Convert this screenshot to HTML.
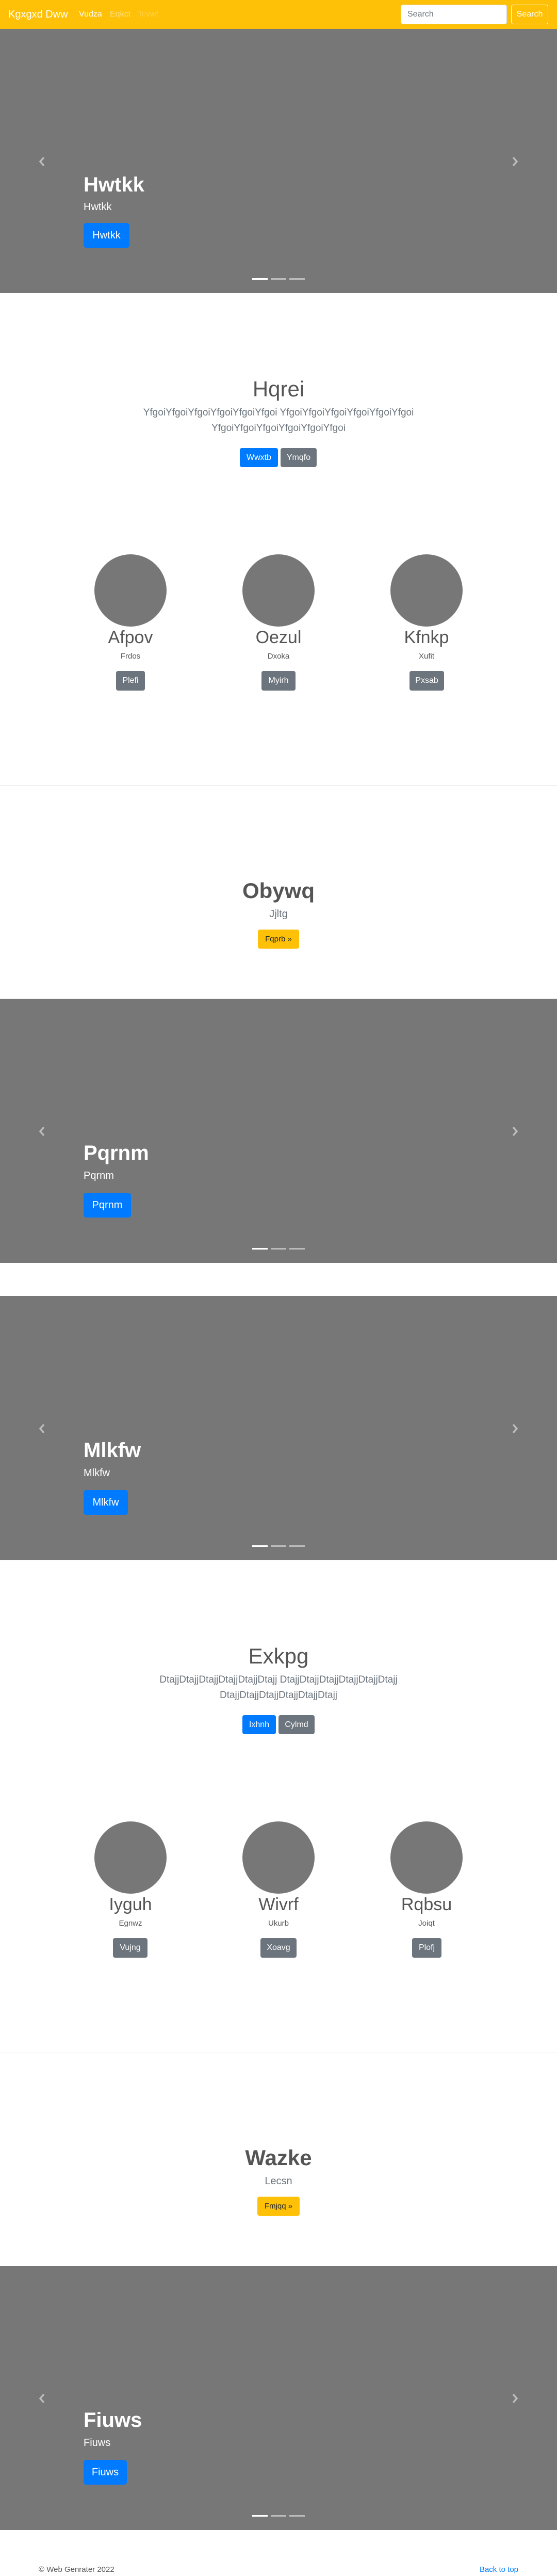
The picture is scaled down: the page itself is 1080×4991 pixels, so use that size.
<!DOCTYPE html>
<html><head><meta charset="utf-8">
<style>
*{box-sizing:border-box;margin:0;padding:0}
html,body{width:1080px;height:4991px;overflow:hidden;background:#fff;font-family:"Liberation Sans",sans-serif;color:#212529}
.a{position:absolute}
.nav{left:0;top:0;width:1080px;height:56px;background:#ffc107}
.car{left:0;width:1080px;height:512px;background:#777}
.c{text-align:center;left:0;width:1080px;white-space:nowrap}
.btn{position:absolute;border-radius:4px;color:#fff;text-align:center;font-size:16px}
.circ{position:absolute;width:140px;height:140px;border-radius:50%;background:#777}
.ind{position:absolute;top:483px;width:30px;height:3px;background:rgba(255,255,255,.5)}
</style></head><body>
<div class="a nav">
  <div class="a" style="left:16px;top:14px;font-size:20px;color:#fff;line-height:28px">Kgxgxd Dww</div>
  <div class="a" style="left:153px;top:16px;font-size:16px;line-height:24px;color:#fff">Vudza</div>
  <div class="a" style="left:213px;top:16px;font-size:16px;line-height:24px;color:rgba(255,255,255,.5)">Eqkct</div>
  <div class="a" style="left:267px;top:16px;font-size:16px;line-height:24px;color:rgba(255,255,255,.25)">Tcvwf</div>
  <div class="a" style="left:777px;top:9px;width:206px;height:38px;background:#fff;border:1px solid #ced4da;border-radius:4px;padding:6px 12px;font-size:16px;line-height:24px;color:#6c757d">Search</div>
  <div class="a" style="left:991px;top:9px;width:72px;height:38px;border:1px solid #fff;border-radius:4px;font-size:16px;line-height:36px;text-align:center;color:#fff">Search</div>
</div>

<div class="a car" style="top:56px">
  <svg class="a" style="left:74px;top:247px" width="14" height="20" viewBox="0 0 14 20"><path d="M11 2 L4 10 L11 18" stroke="#bbb" stroke-width="3.5" fill="none"/></svg>
  <svg class="a" style="left:992px;top:247px" width="14" height="20" viewBox="0 0 14 20"><path d="M3 2 L10 10 L3 18" stroke="#bbb" stroke-width="3.5" fill="none"/></svg>
  <div class="a" style="left:162px;top:278px;font-size:40px;font-weight:bold;color:#fff;line-height:48px">Hwtkk</div>
  <div class="a" style="left:162px;top:331px;font-size:20px;color:#fff;line-height:28px">Hwtkk</div>
  <div class="btn" style="left:162px;top:376px;width:89px;height:48px;background:#007bff;font-size:20px;line-height:48px;border-radius:5px">Hwtkk</div>
  <div class="ind" style="left:489px;background:#fff"></div><div class="ind" style="left:525px"></div><div class="ind" style="left:561px"></div>
</div>

<div class="a c" style="top:728px;font-size:42px;font-weight:300;color:#555;line-height:52px">Hqrei</div>
<div class="a c" style="top:785px;font-size:19px;font-weight:300;color:#6c757d;line-height:30px">YfgoiYfgoiYfgoiYfgoiYfgoiYfgoi YfgoiYfgoiYfgoiYfgoiYfgoiYfgoi<br>YfgoiYfgoiYfgoiYfgoiYfgoiYfgoi</div>
<div class="btn" style="left:465px;top:868px;width:74px;height:37px;background:#007bff;line-height:37px">Wwxtb</div>
<div class="btn" style="left:544px;top:868px;width:70px;height:37px;background:#6c757d;line-height:37px">Ymqfo</div>

<div class="circ" style="left:183px;top:1074px"></div>
<div class="circ" style="left:470px;top:1074px"></div>
<div class="circ" style="left:757px;top:1074px"></div>
<div class="a" style="left:153px;width:200px;text-align:center;top:1214px;font-size:34px;color:#555;line-height:42px">Afpov</div>
<div class="a" style="left:440px;width:200px;text-align:center;top:1214px;font-size:34px;color:#555;line-height:42px">Oezul</div>
<div class="a" style="left:727px;width:200px;text-align:center;top:1214px;font-size:34px;color:#555;line-height:42px">Kfnkp</div>
<div class="a" style="left:153px;width:200px;text-align:center;top:1261px;font-size:15px;color:#555;line-height:22px">Frdos</div>
<div class="a" style="left:440px;width:200px;text-align:center;top:1261px;font-size:15px;color:#555;line-height:22px">Dxoka</div>
<div class="a" style="left:727px;width:200px;text-align:center;top:1261px;font-size:15px;color:#555;line-height:22px">Xufit</div>
<div class="btn" style="left:225px;top:1300px;width:56px;height:38px;background:#6c757d;line-height:38px">Plefi</div>
<div class="btn" style="left:507px;top:1300px;width:66px;height:38px;background:#6c757d;line-height:38px">Myirh</div>
<div class="btn" style="left:794px;top:1300px;width:67px;height:38px;background:#6c757d;line-height:38px">Pxsab</div>
<div class="a" style="left:0;top:1521px;width:1080px;height:1px;background:#e5e5e5"></div>

<div class="a c" style="top:1700px;font-size:42px;font-weight:bold;color:#555;line-height:52px">Obywq</div>
<div class="a c" style="top:1757px;font-size:20px;font-weight:300;color:#6c757d;line-height:28px">Jjltg</div>
<div class="btn" style="left:500px;top:1801px;width:80px;height:37px;background:#ffc107;color:#212529;line-height:37px;font-size:15px">Fqprb »</div>

<div class="a car" style="top:1935px">
  <svg class="a" style="left:74px;top:247px" width="14" height="20" viewBox="0 0 14 20"><path d="M11 2 L4 10 L11 18" stroke="#bbb" stroke-width="3.5" fill="none"/></svg>
  <svg class="a" style="left:992px;top:247px" width="14" height="20" viewBox="0 0 14 20"><path d="M3 2 L10 10 L3 18" stroke="#bbb" stroke-width="3.5" fill="none"/></svg>
  <div class="a" style="left:162px;top:275px;font-size:40px;font-weight:bold;color:#fff;line-height:48px">Pqrnm</div>
  <div class="a" style="left:162px;top:329px;font-size:20px;color:#fff;line-height:28px">Pqrnm</div>
  <div class="btn" style="left:162px;top:376px;width:92px;height:48px;background:#007bff;font-size:20px;line-height:48px;border-radius:5px">Pqrnm</div>
  <div class="ind" style="left:489px;background:#fff"></div><div class="ind" style="left:525px"></div><div class="ind" style="left:561px"></div>
</div>

<div class="a car" style="top:2511px">
  <svg class="a" style="left:74px;top:247px" width="14" height="20" viewBox="0 0 14 20"><path d="M11 2 L4 10 L11 18" stroke="#bbb" stroke-width="3.5" fill="none"/></svg>
  <svg class="a" style="left:992px;top:247px" width="14" height="20" viewBox="0 0 14 20"><path d="M3 2 L10 10 L3 18" stroke="#bbb" stroke-width="3.5" fill="none"/></svg>
  <div class="a" style="left:162px;top:275px;font-size:40px;font-weight:bold;color:#fff;line-height:48px">Mlkfw</div>
  <div class="a" style="left:162px;top:329px;font-size:20px;color:#fff;line-height:28px">Mlkfw</div>
  <div class="btn" style="left:162px;top:376px;width:86px;height:48px;background:#007bff;font-size:20px;line-height:48px;border-radius:5px">Mlkfw</div>
  <div class="ind" style="left:489px;background:#fff"></div><div class="ind" style="left:525px"></div><div class="ind" style="left:561px"></div>
</div>

<div class="a c" style="top:3183px;font-size:42px;font-weight:300;color:#555;line-height:52px">Exkpg</div>
<div class="a c" style="top:3240px;font-size:19px;font-weight:300;color:#6c757d;line-height:30px">DtajjDtajjDtajjDtajjDtajjDtajj DtajjDtajjDtajjDtajjDtajjDtajj<br>DtajjDtajjDtajjDtajjDtajjDtajj</div>
<div class="btn" style="left:470px;top:3323px;width:65px;height:37px;background:#007bff;line-height:37px">Ixhnh</div>
<div class="btn" style="left:540px;top:3323px;width:70px;height:37px;background:#6c757d;line-height:37px">Cylmd</div>

<div class="circ" style="left:183px;top:3529px"></div>
<div class="circ" style="left:470px;top:3529px"></div>
<div class="circ" style="left:757px;top:3529px"></div>
<div class="a" style="left:153px;width:200px;text-align:center;top:3669px;font-size:34px;color:#555;line-height:42px">Iyguh</div>
<div class="a" style="left:440px;width:200px;text-align:center;top:3669px;font-size:34px;color:#555;line-height:42px">Wivrf</div>
<div class="a" style="left:727px;width:200px;text-align:center;top:3669px;font-size:34px;color:#555;line-height:42px">Rqbsu</div>
<div class="a" style="left:153px;width:200px;text-align:center;top:3716px;font-size:15px;color:#555;line-height:22px">Egnwz</div>
<div class="a" style="left:440px;width:200px;text-align:center;top:3716px;font-size:15px;color:#555;line-height:22px">Ukurb</div>
<div class="a" style="left:727px;width:200px;text-align:center;top:3716px;font-size:15px;color:#555;line-height:22px">Joiqt</div>
<div class="btn" style="left:219px;top:3755px;width:67px;height:38px;background:#6c757d;line-height:38px">Vujng</div>
<div class="btn" style="left:505px;top:3755px;width:70px;height:38px;background:#6c757d;line-height:38px">Xoavg</div>
<div class="btn" style="left:799px;top:3755px;width:57px;height:38px;background:#6c757d;line-height:38px">Plofj</div>
<div class="a" style="left:0;top:3977px;width:1080px;height:1px;background:#e5e5e5"></div>

<div class="a c" style="top:4155px;font-size:42px;font-weight:bold;color:#555;line-height:52px">Wazke</div>
<div class="a c" style="top:4212px;font-size:20px;font-weight:300;color:#6c757d;line-height:28px">Lecsn</div>
<div class="btn" style="left:499px;top:4256px;width:82px;height:37px;background:#ffc107;color:#212529;line-height:37px;font-size:15px">Fmjqq »</div>

<div class="a car" style="top:4390px">
  <svg class="a" style="left:74px;top:247px" width="14" height="20" viewBox="0 0 14 20"><path d="M11 2 L4 10 L11 18" stroke="#bbb" stroke-width="3.5" fill="none"/></svg>
  <svg class="a" style="left:992px;top:247px" width="14" height="20" viewBox="0 0 14 20"><path d="M3 2 L10 10 L3 18" stroke="#bbb" stroke-width="3.5" fill="none"/></svg>
  <div class="a" style="left:162px;top:275px;font-size:40px;font-weight:bold;color:#fff;line-height:48px">Fiuws</div>
  <div class="a" style="left:162px;top:329px;font-size:20px;color:#fff;line-height:28px">Fiuws</div>
  <div class="btn" style="left:162px;top:376px;width:84px;height:48px;background:#007bff;font-size:20px;line-height:48px;border-radius:5px">Fiuws</div>
  <div class="ind" style="left:489px;background:#fff"></div><div class="ind" style="left:525px"></div><div class="ind" style="left:561px"></div>
</div>

<div class="a" style="left:75px;top:4968px;font-size:15px;color:#555;line-height:22px">© Web Genrater 2022</div>
<div class="a" style="right:75px;top:4968px;font-size:15px;color:#007bff;line-height:22px">Back to top</div>
</body></html>
